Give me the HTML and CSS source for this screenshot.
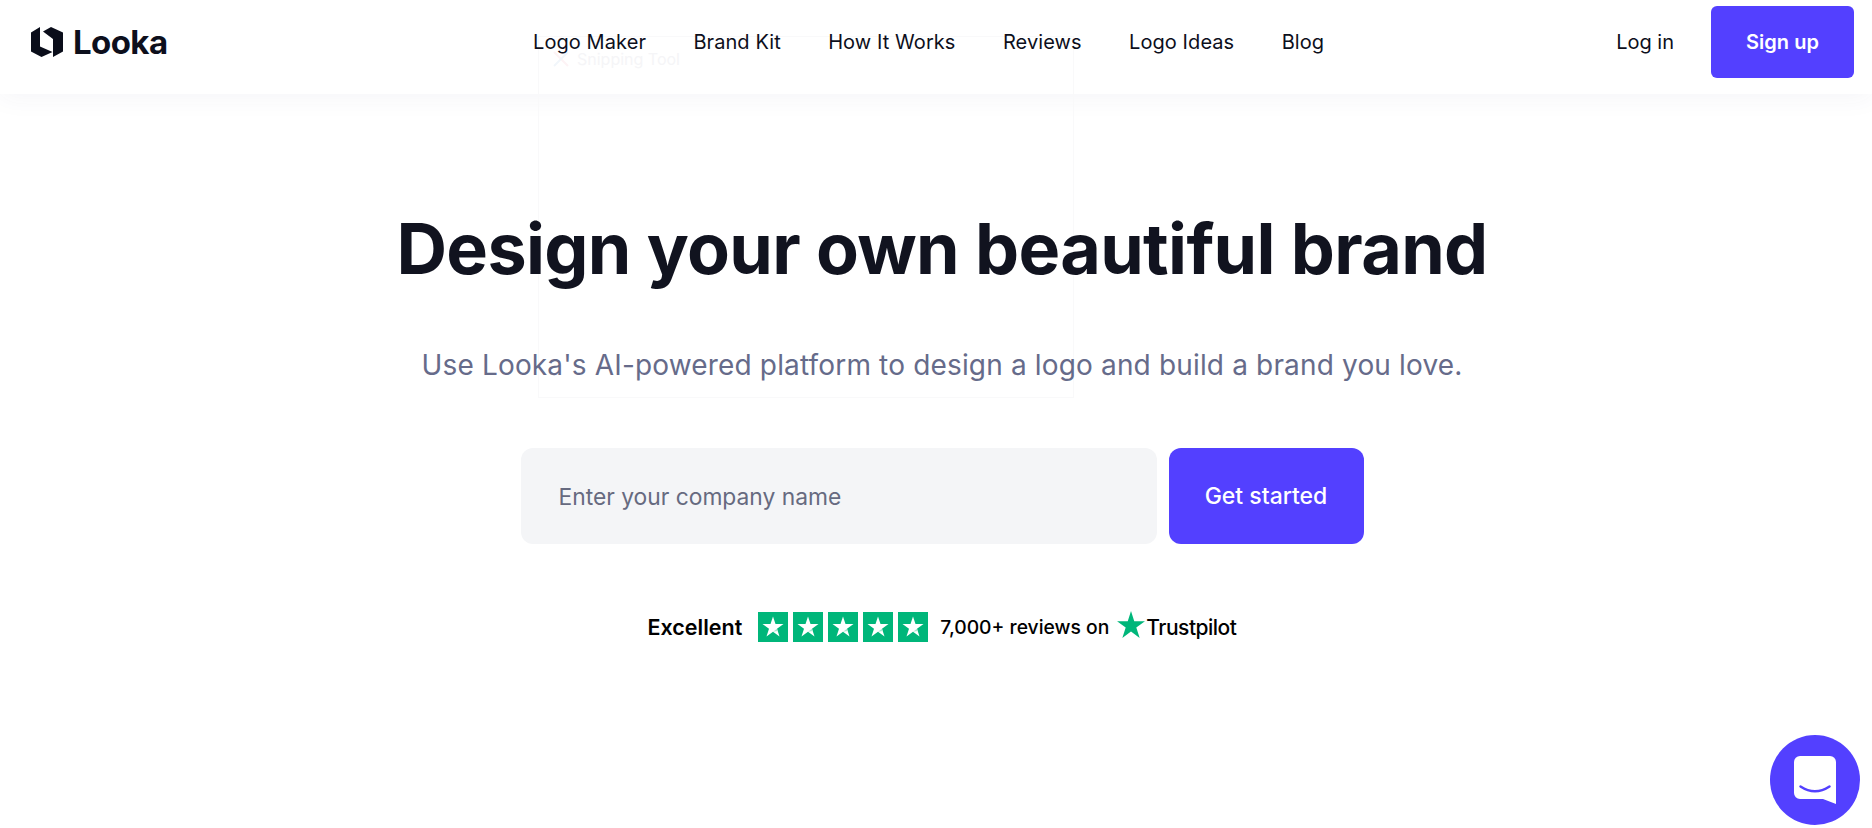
FILE: index.html
```html
<!DOCTYPE html>
<html lang="en">
<head>
    <meta charset="UTF-8">
    <title>Looka</title>
    <link rel="stylesheet" href="styles.css">
</head>
<body>

    <svg class="defs" aria-hidden="true">
        <symbol id="tp-box" viewBox="0 0 30 30">
            <rect width="30" height="30" fill="#00b67a"/>
            <path d="M15 4.500 L17.500 12.100 H25.500 L19 16.800 L21.500 24.500 L15 19.800 L8.500 24.500 L11 16.800 L4.500 12.100 H12.500 Z" fill="#fff"/>
            <path d="M19 16.800 L19.700 19 L15 19.800 Z" fill="#a8e6cf"/>
        </symbol>
    </svg>

    <header class="site-header">
        <a class="brand" href="#">
            <svg class="brand-icon" viewBox="0 0 32 30">
                <path d="M9 0 L0 5.500 V24.500 L10.500 30 L21.500 25 L9 19.500 Z"/>
                <path d="M20 0 L32 5.500 V24.500 L22 30 V12 L12 4.500 Z"/>
            </svg>
            <span>Looka</span>
        </a>
        <nav class="main-nav">
            <a href="#">Logo Maker</a>
            <a href="#">Brand Kit</a>
            <a href="#">How It Works</a>
            <a href="#">Reviews</a>
            <a href="#">Logo Ideas</a>
            <a href="#">Blog</a>
        </nav>
        <div class="header-actions">
            <a class="login" href="#">Log in</a>
            <a class="signup" href="#">Sign up</a>
        </div>
    </header>

    <div class="ghost-window">
        <svg viewBox="0 0 20 20">
            <path d="M3 3 L17 17" stroke="#fdf3f5" stroke-width="2"/>
            <path d="M17 3 L3 17" stroke="#f1f6fb" stroke-width="2"/>
        </svg>
        <span>Snipping Tool</span>
    </div>

    <main class="hero">
        <h1>Design your own beautiful brand</h1>
        <p class="lead">Use Looka's AI-powered platform to design a logo and build a brand you love.</p>
        <form class="start-form">
            <input type="text" placeholder="Enter your company name">
            <button type="button">Get started</button>
        </form>
        <div class="reviews">
            <strong>Excellent</strong>
            <div class="stars">
                <svg><use href="#tp-box"/></svg>
                <svg><use href="#tp-box"/></svg>
                <svg><use href="#tp-box"/></svg>
                <svg><use href="#tp-box"/></svg>
                <svg><use href="#tp-box"/></svg>
            </div>
            <span class="count">7,000+ reviews on</span>
            <span class="trustpilot">
                <svg viewBox="0 0 30 29"><path d="M15 0 L18.500 11 H30 L20.700 17.800 L24.300 29 L15 22.100 L5.700 29 L9.300 17.800 L0 11 H11.500 Z" fill="#00b67a"/></svg>
                Trustpilot
            </span>
        </div>
    </main>

    <button class="chat-btn" type="button" aria-label="Chat">
        <svg viewBox="0 0 42 48">
            <path d="M6 0 H36 A6 6 0 0 1 42 6 V48 L29 43 H6 A6 6 0 0 1 0 37 V6 A6 6 0 0 1 6 0 Z" fill="#fff"/>
            <path d="M6.500 30.500 Q21 40 35.500 30.500" fill="none" stroke="#5340ff" stroke-width="2.500" stroke-linecap="round"/>
        </svg>
    </button>

</body>
</html>
```

FILE: styles.css
```css
* {
    box-sizing: border-box;
    margin: 0;
    padding: 0;
}

body {
    background: #fff;
    color: #0d0f1c;
    font-family: Inter, "Noto Sans", sans-serif;
    height: 828px;
    overflow: hidden;
    position: relative;
}

a {
    color: inherit;
    text-decoration: none;
}

.defs {
    display: none;
}

.site-header {
    height: 94px;
    padding: 6px 18px 0 31px;
    display: flex;
    justify-content: space-between;
    align-items: flex-start;
    background: #fff;
    box-shadow: 0 4px 24px rgba(60, 60, 120, 0.05);
}

.brand {
    height: 72px;
    display: flex;
    align-items: center;
    gap: 10px;
    font-size: 33px;
    font-weight: 700;
    letter-spacing: -0.6px;
}

.brand-icon {
    width: 32px;
    height: 30px;
    fill: #0a0d1a;
}

.main-nav {
    height: 72px;
    position: absolute;
    left: 533px;
    z-index: 2;
    display: flex;
    align-items: center;
    gap: 47.400px;
    font-size: 20px;
    letter-spacing: 0.08px;
}

.header-actions {
    display: flex;
    align-items: center;
    gap: 37px;
    font-size: 20px;
}

.signup {
    width: 143px;
    height: 72px;
    display: flex;
    align-items: center;
    justify-content: center;
    background: #5340ff;
    border-radius: 6px;
    color: #fff;
    font-weight: 600;
}

.ghost-window {
    position: absolute;
    left: 538px;
    top: 36px;
    width: 536px;
    height: 362px;
    z-index: 1;
    border: 1px solid #f9f9fa;
    padding: 12px;
    display: flex;
    align-items: flex-start;
    gap: 6px;
    color: #f5f5f7;
    font-size: 16px;
}

.ghost-window svg {
    width: 20px;
    height: 20px;
}

.hero {
    padding-left: 12px;
    display: flex;
    flex-direction: column;
    align-items: center;
    position: relative;
    z-index: 2;
}

h1 {
    margin-top: 108px;
    font-size: 70px;
    font-weight: 700;
    line-height: 94px;
    letter-spacing: -0.65px;
    color: #11131f;
}

.lead {
    margin-top: 50px;
    font-size: 28px;
    line-height: 38px;
    letter-spacing: 0.16px;
    color: #666b8a;
}

.start-form {
    margin-top: 64px;
    display: flex;
    gap: 12px;
}

.start-form input {
    width: 636px;
    height: 96px;
    padding: 0 38px;
    border: 0;
    border-radius: 12px;
    background: #f4f5f7;
    font: 22.800px Inter, "Noto Sans", sans-serif;
}

.start-form input::placeholder {
    color: #666a80;
    opacity: 1;
}

.start-form button {
    width: 195px;
    height: 96px;
    border: 0;
    border-radius: 12px;
    background: #5340ff;
    color: #fff;
    font: 500 23px Inter, "Noto Sans", sans-serif;
}

.reviews {
    margin-top: 68px;
    display: flex;
    align-items: center;
    font-size: 19.300px;
    color: #000;
}

.reviews strong {
    font-size: 21.500px;
    font-weight: 600;
    margin-right: 16px;
}

.stars {
    display: flex;
    gap: 5px;
    margin-right: 12px;
}

.stars svg {
    width: 30px;
    height: 30px;
}

.count {
    font-weight: 500;
    margin-right: 8px;
}

.trustpilot {
    display: flex;
    align-items: center;
    gap: 1px;
    font-size: 21px;
    font-weight: 500;
    letter-spacing: -0.5px;
}

.trustpilot svg {
    width: 28px;
    height: 27px;
    margin-top: -6px;
}

.chat-btn {
    position: absolute;
    left: 1770px;
    top: 735px;
    width: 90px;
    height: 90px;
    border: 0;
    border-radius: 50%;
    background: #5340ff;
    display: flex;
    align-items: center;
    justify-content: center;
}

.chat-btn svg {
    width: 42px;
    height: 48px;
}
```
